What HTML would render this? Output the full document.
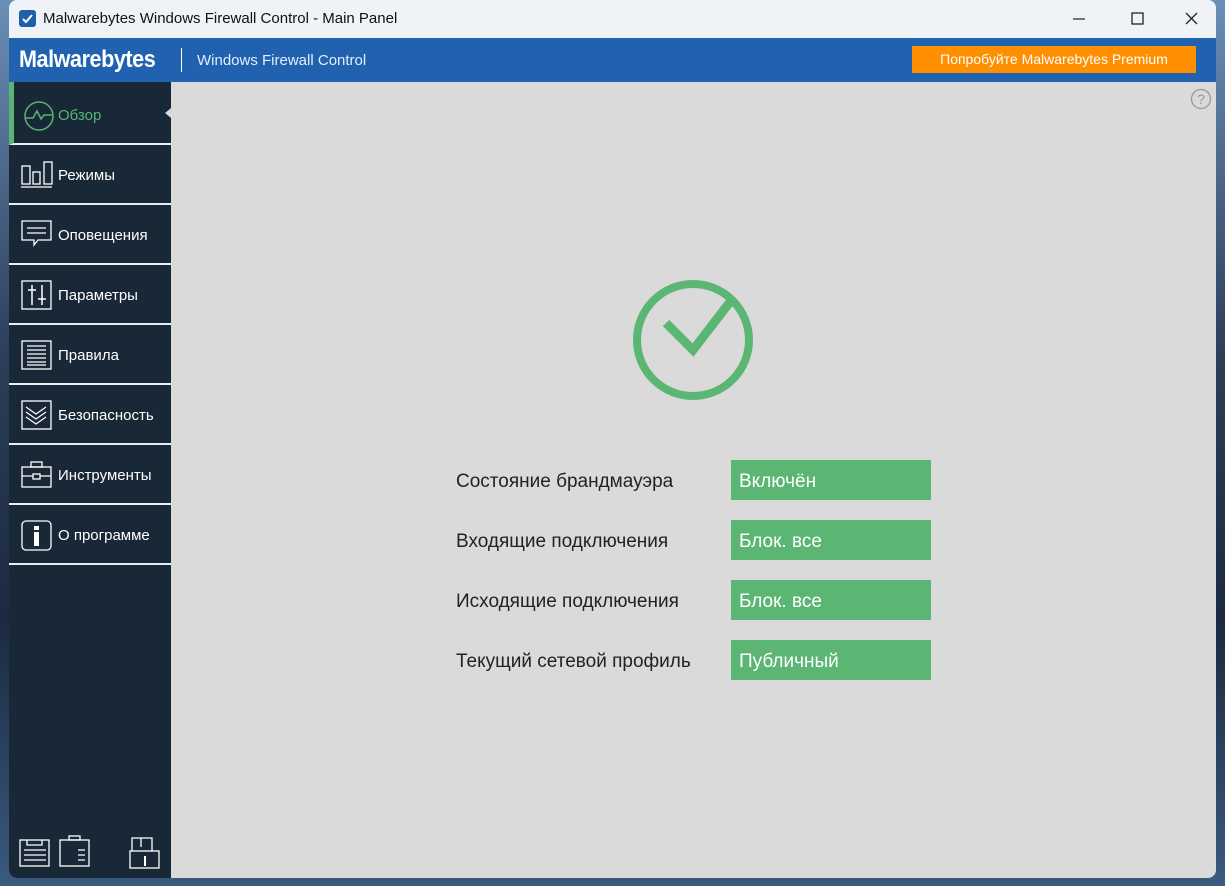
<!DOCTYPE html>
<html><head><meta charset="utf-8"><style>
*{margin:0;padding:0;box-sizing:border-box}
body{width:1225px;height:886px;overflow:hidden;background:linear-gradient(180deg,#6a8fb8 0%,#2c3e5a 40%,#1b2a40 70%,#3a5a80 100%);font-family:"Liberation Sans","DejaVu Sans",sans-serif;position:relative}
.win{position:absolute;left:9px;top:0;width:1207px;height:878px;border-radius:8px;overflow:hidden;background:#dadada}
.title{height:38px;background:#eff3f8;position:relative;font-size:15px;color:#111}
.title .t{position:absolute;left:34px;top:10px}
.cb{position:absolute;left:10px;top:10px;width:17px;height:17px;background:#1f5ea8;border-radius:3px}
.hdr{height:44px;background:#2062b0;position:relative;color:#fff}
.logo{position:absolute;left:10px;top:8px;font-size:24px;font-weight:bold;letter-spacing:-0.5px;transform:scaleX(0.9);transform-origin:left}
.sep{position:absolute;left:172px;top:10px;width:1px;height:24px;background:#fff}
.wfc{position:absolute;left:188px;top:14px;font-size:15px;color:#e6eef8}
.btn{position:absolute;left:903px;top:8px;width:284px;height:27px;background:#fe8f00;color:#fff;font-size:14px;text-align:center;line-height:27px}
.side{position:absolute;left:0;top:82px;width:162px;height:796px;background:#182836;padding-top:3px}
.item{height:60px;border-bottom:2px solid #e8eef2;position:relative;color:#fff;font-size:15px}
.item span{position:absolute;left:49px;top:22px}
.item svg{position:absolute;left:12px;top:15px}
.act{border-left:5px solid #5ab472;color:#5ab472;margin-top:-3px;height:63px;padding-top:3px}
.act span{left:44px;top:25px}.act svg{left:10px;top:18px}
.row{position:absolute;left:447px;font-size:19px;color:#222}
.val{position:absolute;left:722px;width:200px;height:40px;background:#5ab672;color:#fff;font-size:19px;padding:11px 0 0 8px}
</style></head><body>
<div class="win">
<div class="title"><div class="cb"><svg width="17" height="17"><path d="M4 9l3 3 6-7" stroke="#fff" stroke-width="2" fill="none"/></svg></div><div class="t">Malwarebytes Windows Firewall Control - Main Panel</div>
<svg style="position:absolute;left:1060px;top:10px" width="140" height="18"><path d="M4 9h12" stroke="#222" stroke-width="1.2"/><rect x="63" y="3" width="11" height="11" fill="none" stroke="#222" stroke-width="1.3"/><path d="M117 3l11 11M128 3l-11 11" stroke="#222" stroke-width="1.3"/></svg></div>
<div class="hdr"><div class="logo">Malwarebytes</div><div class="sep"></div><div class="wfc">Windows Firewall Control</div><div class="btn">Попробуйте Malwarebytes Premium</div></div>
<div class="side">
<div class="item act"><svg width="32" height="32"><circle cx="15" cy="16" r="14" fill="none" stroke="#5ab472" stroke-width="1.5"/><path d="M2 18h7l4-7 4 8 3-4h8" fill="none" stroke="#5ab472" stroke-width="1.5"/></svg><span>Обзор</span><svg style="left:150px;top:22px" width="12" height="18"><path d="M12 0L1 9l11 9z" fill="#dadada"/></svg></div>
<div class="item"><svg width="32" height="30"><rect x="1" y="6" width="8" height="18" fill="none" stroke="#fff" stroke-width="1.3"/><rect x="12" y="12" width="7" height="12" fill="none" stroke="#fff" stroke-width="1.3"/><rect x="23" y="2" width="8" height="22" fill="none" stroke="#fff" stroke-width="1.3"/><path d="M0 27h31" stroke="#fff" stroke-width="1.3"/></svg><span>Режимы</span></div>
<div class="item"><svg width="32" height="30"><path d="M1 1h29v19H17l-4 5v-5H1z" fill="none" stroke="#fff" stroke-width="1.3"/><path d="M6 8h19M6 13h19" stroke="#fff" stroke-width="1.3"/></svg><span>Оповещения</span></div>
<div class="item"><svg width="32" height="30"><rect x="1" y="1" width="29" height="28" fill="none" stroke="#fff" stroke-width="1.3"/><path d="M11 5v20M7 10h8M21 5v20M17 19h8" stroke="#fff" stroke-width="1.5"/></svg><span>Параметры</span></div>
<div class="item"><svg width="32" height="30"><rect x="1" y="1" width="29" height="28" fill="none" stroke="#fff" stroke-width="1.3"/><path d="M6 6h19M6 10h19M6 14h19M6 18h19M6 22h19M6 25h19" stroke="#fff" stroke-width="1.2"/></svg><span>Правила</span></div>
<div class="item"><svg width="32" height="30"><rect x="1" y="1" width="29" height="28" fill="none" stroke="#fff" stroke-width="1.3"/><path d="M5 7l10 7 10-7M5 12l10 7 10-7M5 17l10 7 10-7" fill="none" stroke="#fff" stroke-width="1.2"/></svg><span>Безопасность</span></div>
<div class="item"><svg width="32" height="30"><rect x="1" y="7" width="29" height="20" fill="none" stroke="#fff" stroke-width="1.3"/><rect x="10" y="2" width="11" height="5" fill="none" stroke="#fff" stroke-width="1.3"/><path d="M1 16h29" stroke="#fff" stroke-width="1.3"/><rect x="12" y="14" width="7" height="5" fill="#182836" stroke="#fff" stroke-width="1.3"/></svg><span>Инструменты</span></div>
<div class="item"><svg width="32" height="32"><rect x="1" y="1" width="29" height="29" rx="4" fill="none" stroke="#fff" stroke-width="1.3"/><rect x="13" y="6" width="5" height="4" fill="#fff"/><rect x="13" y="12" width="5" height="14" fill="#fff"/></svg><span>О программе</span></div>
<svg style="position:absolute;left:10px;top:752px" width="160" height="35"><rect x="1" y="6" width="29" height="26" fill="none" stroke="#fff" stroke-width="1.3"/><path d="M8 6v5h15V6M5 16h22M5 21h22M5 26h22" fill="none" stroke="#fff" stroke-width="1.3"/><rect x="41" y="6" width="29" height="26" fill="none" stroke="#fff" stroke-width="1.3"/><rect x="50" y="2" width="11" height="4" fill="none" stroke="#fff" stroke-width="1.3"/><path d="M59 16h7M59 21h7M59 26h7" stroke="#fff" stroke-width="1.3"/><path d="M113 17V4h20v13M122 4v9" fill="none" stroke="#fff" stroke-width="1.3"/><rect x="111" y="17" width="29" height="17" fill="none" stroke="#fff" stroke-width="1.3"/><path d="M126 22v10" stroke="#fff" stroke-width="2"/></svg>
</div>
<svg style="position:absolute;left:1181px;top:88px" width="22" height="22"><circle cx="11" cy="11" r="9.5" fill="none" stroke="#999" stroke-width="1.3"/><text x="11" y="16" font-size="14" fill="#999" text-anchor="middle" font-family="Liberation Sans">?</text></svg>
<svg style="position:absolute;left:620px;top:277px" width="128" height="128"><circle cx="64" cy="63" r="56" fill="none" stroke="#5ab672" stroke-width="8"/><path d="M37 46l27 27 37-48" fill="none" stroke="#5ab672" stroke-width="9"/></svg>
<div class="row" style="top:471px">Состояние брандмауэра</div><div class="val" style="top:460px">Включён</div>
<div class="row" style="top:531px">Входящие подключения</div><div class="val" style="top:520px">Блок. все</div>
<div class="row" style="top:591px">Исходящие подключения</div><div class="val" style="top:580px">Блок. все</div>
<div class="row" style="top:651px">Текущий сетевой профиль</div><div class="val" style="top:640px">Публичный</div>
</div>
</body></html>
